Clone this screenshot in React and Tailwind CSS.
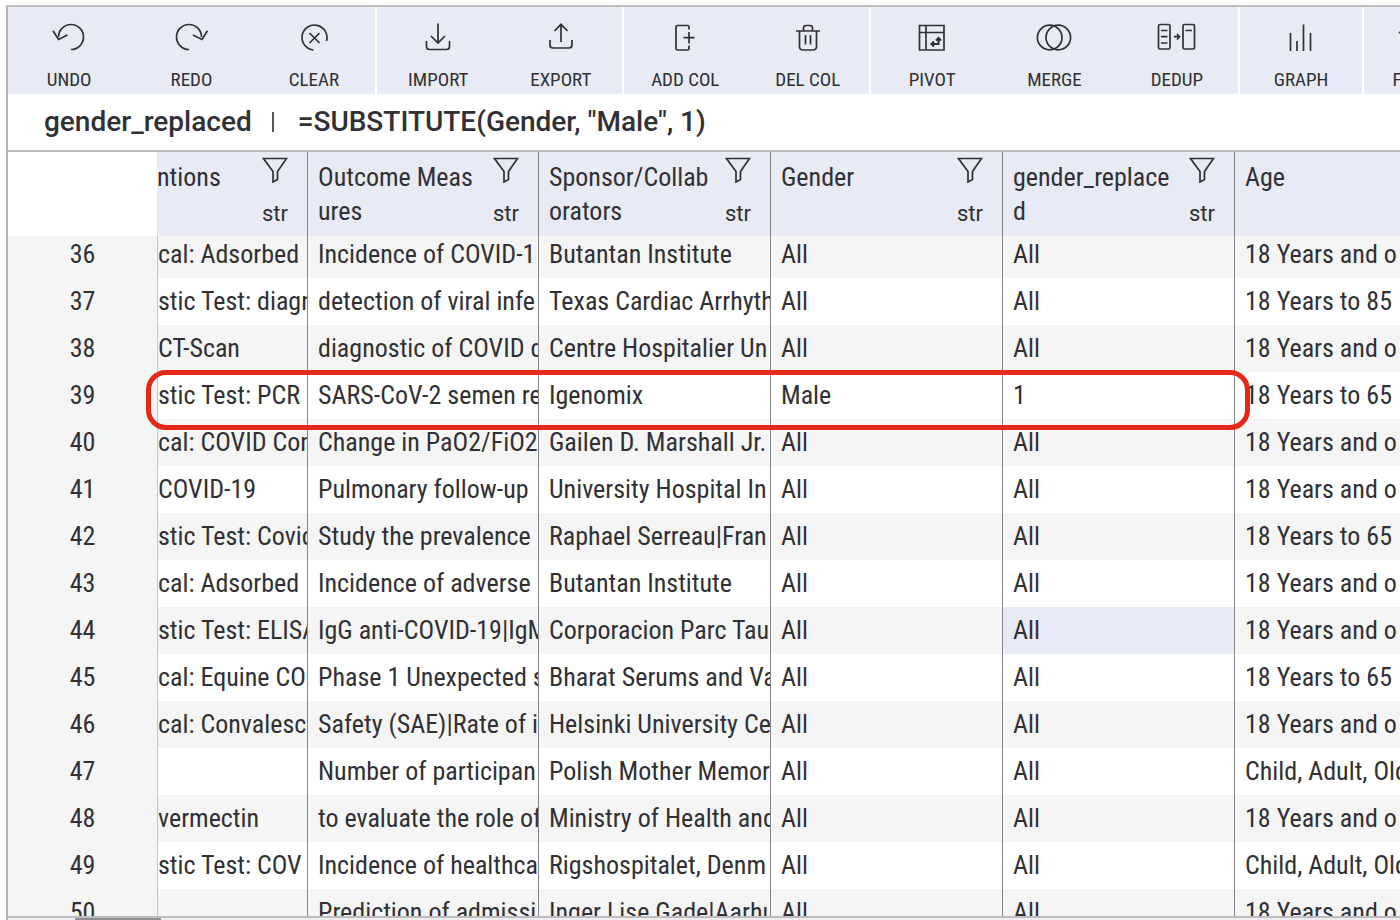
const TOOL_ICONS = {
  undo: (
    <>
      <path d="M9.500 13A12.500 12.500 0 1 1 22 25.500" />
      <path d="M4 6.800 9.500 15.500 18.500 11" />
    </>
  ),
  redo: (
    <>
      <path d="M30.500 13A12.500 12.500 0 1 0 18 25.500" />
      <path d="M36.500 6.800 31 15.500 22 11" />
    </>
  ),
  clear: (
    <>
      <path d="M19.500 26A12.500 12.500 0 1 1 32.500 17" />
      <path d="M15.500 9 25.500 19M25.500 9 15.500 19" />
    </>
  ),
  import: (
    <>
      <path d="M20 -0.500V18.500M13 12 20 19 27 12" />
      <path d="M8.500 17V22.500Q8.500 25.500 11.500 25.500H28.500Q31.500 25.500 31.500 22.500V17" />
    </>
  ),
  export: (
    <>
      <path d="M20 18V0M13.500 7 20 0.300 26.500 7" />
      <path d="M9 16V21Q9 24 12 24H28Q31 24 31 21V16" />
    </>
  ),
  addCol: (
    <>
      <path d="M24 5.500V3Q24 1.500 22.500 1.500H12.500Q11 1.500 11 3V24.500Q11 26 12.500 26H22.500Q24 26 24 24.500V21.500" />
      <path d="M24 8V19.500M18.500 13.700H29.500" />
    </>
  ),
  delCol: (
    <>
      <path d="M8 7H32M11.500 7V22.500Q11.500 26 15 26H25Q28.500 26 28.500 22.500V7" />
      <path d="M15.500 7V4Q15.500 1.500 18 1.500H22Q24.500 1.500 24.500 4V7M17.500 11V20.500M22.500 11V20.500" />
    </>
  ),
  pivot: (
    <>
      <path d="M7.500 1.500H32V26H7.500ZM7.500 8.500H32M14 1.500V26" />
      <path d="M19.500 20H26.500V14.500M22 17.500 19.500 20 22 22.500M24 16.500 26.500 14 29 16.500" strokeWidth="2" />
    </>
  ),
  merge: (
    <>
      <circle cx="15.700" cy="13.500" r="12.300" />
      <circle cx="24.300" cy="13.500" r="12.300" />
    </>
  ),
  dedup: (
    <>
      <rect x="1.500" y="0.500" width="11.500" height="24.500" rx="1.500" />
      <rect x="26" y="0.500" width="11.500" height="24.500" rx="1.500" />
      <path d="M4 6.500H10.500M4 12.700H10.500M4 19H10.500M28.500 6.500H35M17 12.700H22.500M20 10 22.500 12.700 20 15.500" />
    </>
  ),
  graph: <path d="M9.500 9V27M16 17V27M22.500 0.500V27M29.500 9V27" />,
  format: <path d="M-6 9 -3 7H20M-3 7V25H20" />,
};

const GROUPS = [
  { width: "w-[367px]", tools: [["UNDO", "undo"], ["REDO", "redo"], ["CLEAR", "clear"]] },
  { width: "w-[245px]", tools: [["IMPORT", "import"], ["EXPORT", "export"]] },
  { width: "w-[245px]", tools: [["ADD COL", "addCol"], ["DEL COL", "delCol"]] },
  { width: "w-[367px]", tools: [["PIVOT", "pivot"], ["MERGE", "merge"], ["DEDUP", "dedup"]] },
  { width: "w-[122px]", tools: [["GRAPH", "graph"]] },
  { width: "w-[122px]", tools: [["FORMAT", "format"]] },
];

const COLUMNS = ["ntions", "Outcome Measures", "Sponsor/Collaborators", "Gender", "gender_replaced", "Age"];

const OLDER = "18 Years and o";

const ROWS = [
  [36, "cal: Adsorbed", "Incidence of COVID-1", "Butantan Institute", "All", "All", OLDER],
  [37, "stic Test: diagn", "detection of viral infe", "Texas Cardiac Arrhyth", "All", "All", "18 Years to 85"],
  [38, "CT-Scan", "diagnostic of COVID d", "Centre Hospitalier Un", "All", "All", OLDER],
  [39, "stic Test: PCR", "SARS-CoV-2 semen re", "Igenomix", "Male", "1", "18 Years to 65"],
  [40, "cal: COVID Con", "Change in PaO2/FiO2", "Gailen D. Marshall Jr.", "All", "All", OLDER],
  [41, "COVID-19", "Pulmonary follow-up", "University Hospital In", "All", "All", OLDER],
  [42, "stic Test: Covid", "Study the prevalence", "Raphael Serreau|Fran", "All", "All", "18 Years to 65"],
  [43, "cal: Adsorbed", "Incidence of adverse", "Butantan Institute", "All", "All", OLDER],
  [44, "stic Test: ELISA", "IgG anti-COVID-19|IgM", "Corporacion Parc Tau", "All", "All", OLDER],
  [45, "cal: Equine CO", "Phase 1 Unexpected s", "Bharat Serums and Va", "All", "All", "18 Years to 65"],
  [46, "cal: Convalesc", "Safety (SAE)|Rate of i", "Helsinki University Ce", "All", "All", OLDER],
  [47, "", "Number of participan", "Polish Mother Memor", "All", "All", "Child, Adult, Old"],
  [48, "vermectin", "to evaluate the role of", "Ministry of Health and", "All", "All", OLDER],
  [49, "stic Test: COV", "Incidence of healthca", "Rigshospitalet, Denm", "All", "All", "Child, Adult, Old"],
  [50, "", "Prediction of admissi", "Inger Lise Gade|Aarhu", "All", "All", OLDER],
];

function ToolButton({ label, icon }) {
  return (
    <button type="button" className="flex flex-1 flex-col items-center pt-[17px]">
      <svg viewBox="0 0 40 28" className="h-7 w-10 overflow-visible" fill="none" stroke="currentColor" strokeWidth="1.700" aria-hidden="true">
        {TOOL_ICONS[icon]}
      </svg>
      <span className="mt-4 text-[19px] leading-6">{label}</span>
    </button>
  );
}

function Toolbar() {
  return (
    <div className="flex h-[87px] shrink-0 gap-0.5 overflow-hidden">
      {GROUPS.map((group) => (
        <div key={group.tools[0][0]} className={`flex shrink-0 bg-[#e8eaf6] ${group.width}`}>
          {group.tools.map(([label, icon]) => (
            <ToolButton key={label} label={label} icon={icon} />
          ))}
        </div>
      ))}
    </div>
  );
}

function HeaderCell({ title, first }) {
  return (
    <th scope="col" className={`border-r border-[#85858c] bg-[#e8eaf6] p-0 align-top font-normal ${first ? "" : "pl-[10px]"}`}>
      <div className="flex h-[84px] justify-between overflow-hidden pt-[5px]">
        <span className="w-[164px] pt-[3px] text-left leading-[34px] break-all">{title}</span>
        <span className="flex w-14 shrink-0 flex-col items-center pr-2">
          <button type="button" aria-label={`Filter ${title}`}>
            <svg viewBox="0 0 26 26" className="size-[26px]" fill="none" stroke="currentColor" strokeWidth="1.700" aria-hidden="true">
              <path d="M1.500 1.500H24.500L15.500 14.500V22.500L11 25V14.500Z" />
            </svg>
          </button>
          <span className="mt-[17px] font-[Roboto,sans-serif] text-[22px] leading-7">str</span>
        </span>
      </div>
    </th>
  );
}

function DataRow({ row }) {
  const [id, ...cells] = row;
  return (
    <tr className="group odd:bg-[#f5f5f5]">
      <th scope="row" className="bg-[#f5f5f5] p-0 font-normal">
        <div className="flex h-[47px] items-end justify-center pb-1 leading-10 group-first:h-[42px]">{id}</div>
      </th>
      {cells.map((text, i) => (
        <td
          key={i}
          className={`overflow-hidden border-r border-[#85858c] p-0 whitespace-nowrap ${i === 0 ? "border-l border-l-[#c4c4cc]" : "pl-[10px]"} ${id === 44 && i === 4 ? "bg-[#e8eaf6]" : ""}`}
        >
          <div className="flex h-[47px] items-end overflow-hidden pb-1 leading-10 group-first:h-[42px]">{text}</div>
        </td>
      ))}
    </tr>
  );
}

export default function App() {
  return (
    <div className="flex h-screen flex-col overflow-hidden bg-white pt-[5px] pl-[6px] font-['Roboto_Condensed',Roboto,sans-serif] text-[#303035]">
      <main className="flex min-h-0 flex-1 flex-col overflow-hidden border-t-2 border-l-2 border-t-[#c0bcc0] border-l-[#b4b2ba]">
        <Toolbar />
        <div className="flex h-14 shrink-0 items-center pl-9 font-[Roboto,sans-serif] text-[28px] leading-8 font-medium">
          <span>gender_replaced</span>
          <span className="ml-5 h-5 w-0.5 bg-[#55555c]" />
          <input aria-label="Formula" defaultValue={'=SUBSTITUTE(Gender, "Male", 1)'} className="ml-6 min-w-0 flex-1 bg-transparent outline-none" />
        </div>
        <div className="relative min-h-0 flex-1 overflow-hidden border-y-2 border-[#c0bcc0]">
          <table className="w-[1459px] table-fixed border-separate border-spacing-0 text-[26px]">
            <colgroup>
              <col className="w-[149px]" />
              <col className="w-[151px]" />
              <col className="w-[231px]" />
              <col className="w-[232px]" />
              <col className="w-[232px]" />
              <col className="w-[232px]" />
              <col className="w-[232px]" />
            </colgroup>
            <thead>
              <tr>
                <td className="bg-white" />
                {COLUMNS.map((title, i) => (
                  <HeaderCell key={title} title={title} first={i === 0} />
                ))}
              </tr>
            </thead>
            <tbody>
              {ROWS.map((row) => (
                <DataRow key={row[0]} row={row} />
              ))}
            </tbody>
          </table>
          <div className="pointer-events-none absolute top-[218px] left-[138px] h-[60px] w-[1104px] rounded-[20px] border-[5px] border-[#e62817]" />
        </div>
        <div className="flex h-0.5 shrink-0 bg-[#eeeef2]">
          <div className="ml-[67px] w-[86px] bg-[#8f8f96]" />
        </div>
      </main>
    </div>
  );
}
